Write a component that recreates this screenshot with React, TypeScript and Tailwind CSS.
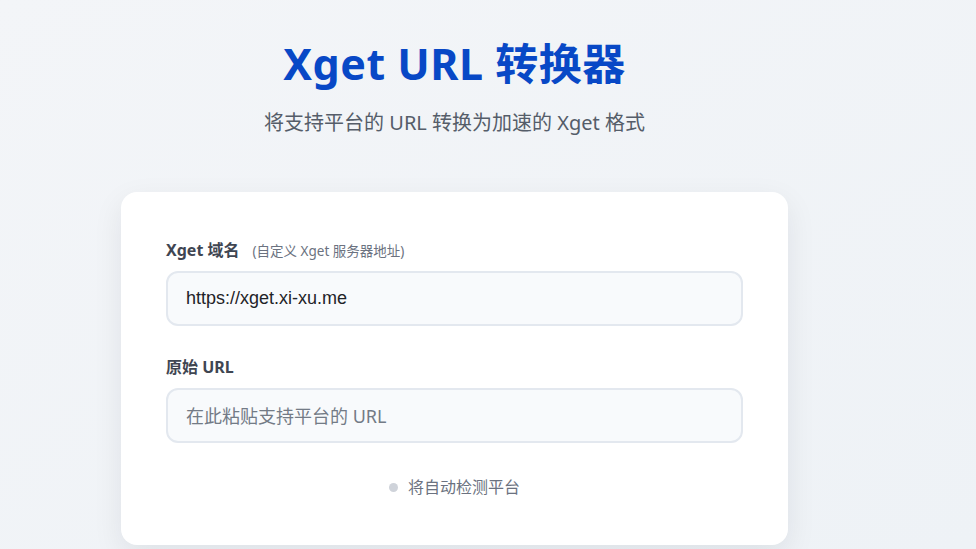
export default function App() {
  return (
    <div
      className="min-h-screen bg-gradient-to-br from-[#f3f5f8] to-[#eef2f6] pt-[36px]"
      style={{ fontFamily: '"Noto Sans", "Noto Sans CJK SC", sans-serif' }}
    >
      <div className="w-[909px] flex flex-col items-center">
        <h1 className="text-[43px] leading-[56px] font-bold text-[#0848c6] tracking-[0.5px]">
          Xget URL 转换器
        </h1>
        <p className="mt-[17px] text-[20px] leading-[28px] text-[#555d69]">
          将支持平台的 URL 转换为加速的 Xget 格式
        </p>

        <div className="mt-[55px] w-[667px] bg-white rounded-[16px] shadow-[0_10px_30px_rgba(15,23,42,0.08)] px-[45px] pt-[46px] pb-[46px]">
          <div className="flex items-baseline gap-[13px]">
            <span className="text-[16px] font-bold text-[#3f4652]">Xget 域名</span>
            <span className="text-[13.5px] text-[#6b7280]">(自定义 Xget 服务器地址)</span>
          </div>
          <input
            defaultValue="https://xget.xi-xu.me"
            className="mt-[9px] w-full h-[55px] rounded-[12px] border-2 border-[#e3e8ef] bg-[#f8fafc] px-[18px] text-[18px] text-[#1f2328] outline-none"
            style={{ fontFamily: '"Liberation Sans", Arial, sans-serif' }}
          />

          <div className="mt-[29px] text-[16px] font-bold text-[#3f4652]">原始 URL</div>
          <input
            placeholder="在此粘贴支持平台的 URL"
            className="mt-[9px] w-full h-[55px] rounded-[12px] border-2 border-[#e3e8ef] bg-[#f8fafc] px-[18px] text-[18px] text-[#1f2328] placeholder:text-[#737b86] outline-none"
          />

          <div className="mt-[32px] flex items-center justify-center gap-[10px]">
            <span className="w-[9px] h-[9px] rounded-full bg-[#cfd3da]" />
            <span className="text-[16px] text-[#6b7280]">将自动检测平台</span>
          </div>
        </div>
      </div>
    </div>
  )
}
